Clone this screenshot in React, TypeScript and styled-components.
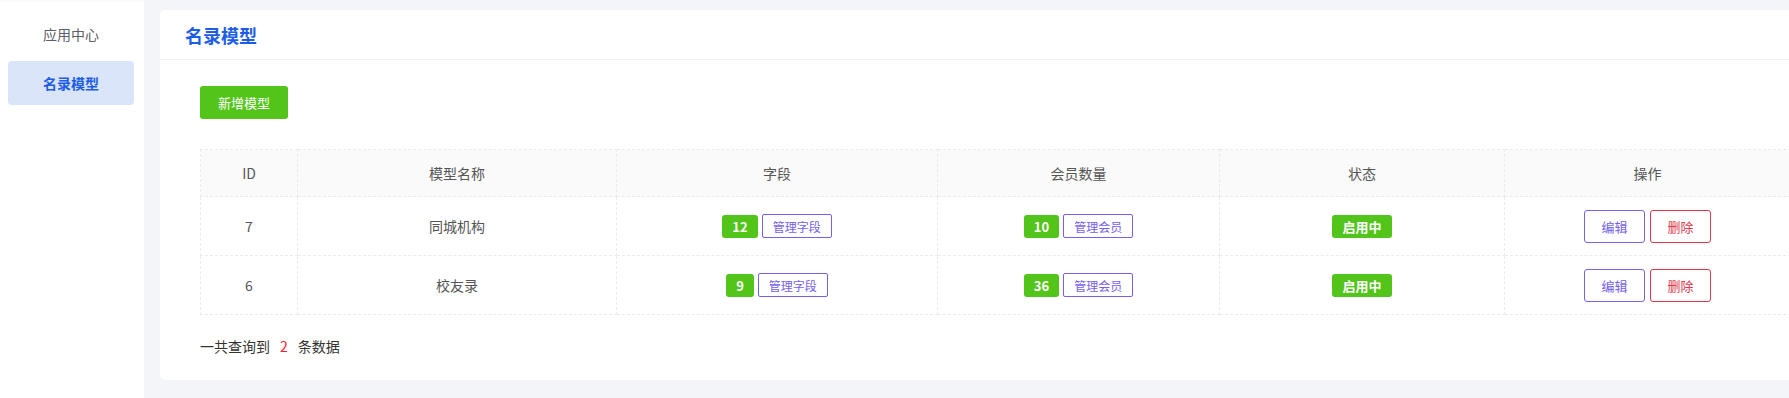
import React from 'react'
import styled, { createGlobalStyle } from 'styled-components'

const GlobalStyle = createGlobalStyle`
  html, body {
    margin: 0;
    padding: 0;
    overflow: hidden;
    background: #f4f5f9;
  }
  body {
    font-family: "Noto Sans CJK SC", "Noto Sans", sans-serif;
    font-size: 14px;
    color: #333;
  }
`

type Model = {
  id: number
  name: string
  fields: number
  members: number
}

const models: Model[] = [
  { id: 7, name: '同城机构', fields: 12, members: 10 },
  { id: 6, name: '校友录', fields: 9, members: 36 },
]

const columns = [
  { title: 'ID', width: 97 },
  { title: '模型名称', width: 319 },
  { title: '字段', width: 321 },
  { title: '会员数量', width: 282 },
  { title: '状态', width: 285 },
  { title: '操作', width: 286 },
]

const App = () => {
  return (
    <>
      <GlobalStyle />
      <Layout>
        <Sidebar>
          <NavItem>应用中心</NavItem>
          <NavItem active>名录模型</NavItem>
        </Sidebar>
        <Main>
          <Card>
            <CardHeader>名录模型</CardHeader>
            <CardBody>
              <PrimaryButton>新增模型</PrimaryButton>
              <Table>
                <colgroup>
                  {columns.map((c) => (
                    <col key={c.title} style={{ width: c.width }} />
                  ))}
                </colgroup>
                <thead>
                  <tr>
                    {columns.map((c) => (
                      <Th key={c.title}>{c.title}</Th>
                    ))}
                  </tr>
                </thead>
                <tbody>
                  {models.map((m) => (
                    <tr key={m.id}>
                      <Td>{m.id}</Td>
                      <Td>{m.name}</Td>
                      <Td>
                        <Inline>
                          <Count>{m.fields}</Count>
                          <LinkButton>管理字段</LinkButton>
                        </Inline>
                      </Td>
                      <Td>
                        <Inline>
                          <Count>{m.members}</Count>
                          <LinkButton>管理会员</LinkButton>
                        </Inline>
                      </Td>
                      <Td>
                        <Status>启用中</Status>
                      </Td>
                      <Td>
                        <Inline gap={5}>
                          <ActionButton tone="#7460ee">编辑</ActionButton>
                          <ActionButton tone="#e0394b">删除</ActionButton>
                        </Inline>
                      </Td>
                    </tr>
                  ))}
                </tbody>
              </Table>
              <Summary>
                一共查询到<Total>2</Total>条数据
              </Summary>
            </CardBody>
          </Card>
        </Main>
      </Layout>
    </>
  )
}

const Layout = styled.div({
  display: 'flex',
  width: '100vw',
  minHeight: '100vh',
})

const Sidebar = styled.aside`
  flex: 0 0 144px;
  box-sizing: border-box;
  background: #fff;
  padding: 12px 10px 0 8px;
  display: flex;
  flex-direction: column;
  gap: 5px;
  box-shadow: inset 0 3px 3px -3px rgba(0, 0, 0, 0.06);
`

const NavItem = styled.div<{ active?: boolean }>`
  height: 44px;
  display: flex;
  align-items: center;
  justify-content: center;
  border-radius: 4px;
  font-size: 14px;
  background: ${(p) => (p.active ? '#dbe5f9' : 'transparent')};
  color: ${(p) => (p.active ? '#1d5de6' : '#5c6068')};
  font-weight: ${(p) => (p.active ? 700 : 400)};
`

const Main = styled.main`
  flex: 1;
  background: #f4f5f9;
  padding: 10px 0 18px 16px;
`

const Card = styled.section`
  width: 1670px;
  background: #fff;
  border-radius: 5px;
`

const CardHeader = styled.h1`
  margin: 0;
  height: 49px;
  display: flex;
  align-items: center;
  padding-left: 25px;
  border-bottom: 1px solid #f0f1f3;
  font-size: 18px;
  font-weight: 700;
  color: #1d5de6;
`

const CardBody = styled.div`
  padding: 26px 40px 24px;
`

const PrimaryButton = styled.button`
  display: block;
  width: 88px;
  height: 33px;
  border: none;
  border-radius: 3px;
  background: #52c41a;
  color: #fff;
  font-family: inherit;
  font-size: 13px;
  cursor: pointer;
`

const Table = styled.table`
  margin-top: 30px;
  width: 1590px;
  table-layout: fixed;
  border-collapse: collapse;
`

const Th = styled.th`
  height: 46px;
  padding: 0;
  background: #fafafa;
  border: 1px dashed #ebebeb;
  font-weight: 400;
  font-size: 14px;
  color: #555;
  text-align: center;
`

const Td = styled.td`
  height: 58px;
  padding: 0;
  border: 1px dashed #ebebeb;
  font-size: 14px;
  color: #555;
  text-align: center;
`

const Inline = styled.div<{ gap?: number }>`
  display: inline-flex;
  align-items: center;
  gap: ${(p) => p.gap ?? 4}px;
  vertical-align: middle;
`

const Count = styled.span`
  height: 23px;
  padding: 0 10px;
  display: inline-flex;
  align-items: center;
  border-radius: 3px;
  background: #52c41a;
  color: #fff;
  font-weight: 700;
  font-size: 13px;
`

const LinkButton = styled.button`
  height: 24px;
  width: 70px;
  padding: 0;
  border: 1px solid #7460ee;
  border-radius: 2px;
  background: #fff;
  color: #7460ee;
  font-family: inherit;
  font-size: 12px;
  cursor: pointer;
`

const Status = styled.span`
  display: inline-flex;
  align-items: center;
  height: 23px;
  padding: 0 10px;
  border-radius: 3px;
  background: #52c41a;
  color: #fff;
  font-weight: 700;
  font-size: 13px;
  vertical-align: middle;
`

const ActionButton = styled.button<{ tone: string }>`
  width: 61px;
  height: 33px;
  padding: 0;
  border: 1px solid ${(p) => p.tone};
  border-radius: 3px;
  background: #fff;
  color: ${(p) => p.tone};
  font-family: inherit;
  font-size: 13px;
  cursor: pointer;
`

const Summary = styled.p`
  margin: 21px 0 0;
  line-height: 20px;
  font-size: 14px;
  color: #333;
`

const Total = styled.span`
  color: #f5222d;
  margin: 0 10px;
`

export default App
